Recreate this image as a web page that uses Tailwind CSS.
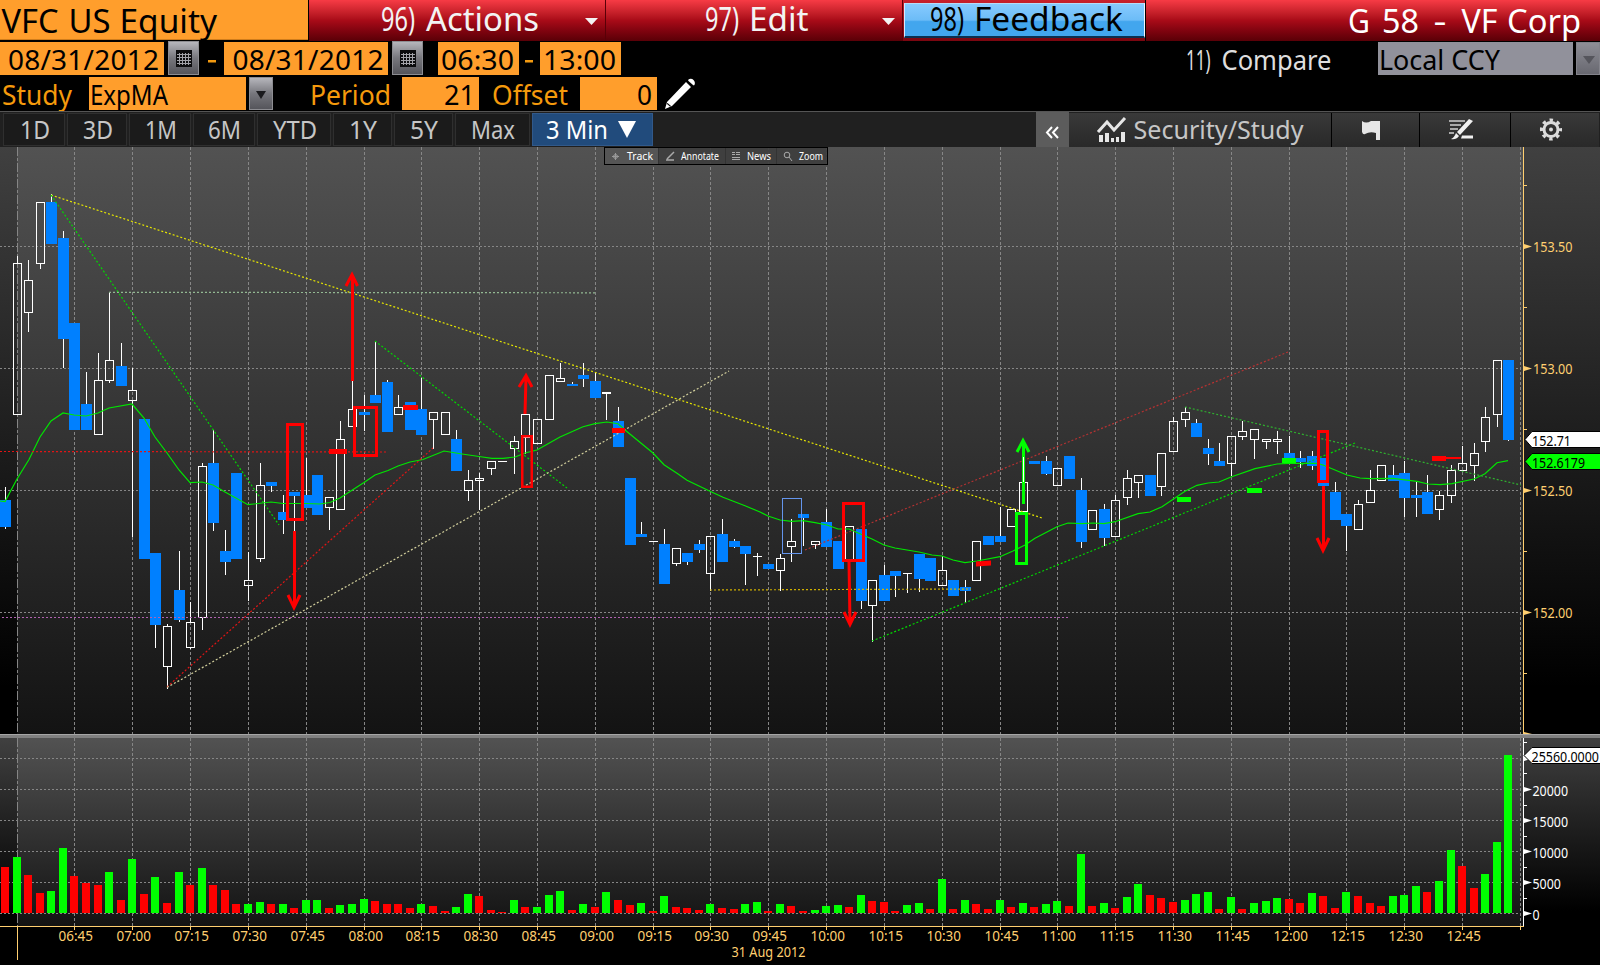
<!DOCTYPE html>
<html lang="en">
<head>
<meta charset="utf-8">
<title>VFC US Equity</title>
<script src="https://cdn.jsdelivr.net/npm/@tailwindcss/browser@4"></script>
</head>
<body class="w-[1600px] h-[965px] overflow-hidden bg-black font-['Noto_Sans',sans-serif] flex flex-col">

<!-- Title bar -->
<header class="flex h-[41px] shrink-0 text-white">
  <div class="w-[308px] h-10 bg-[#ff9e2c] border-b border-[#d07d1c] text-black">
    <svg class="block overflow-visible h-10 w-full" font-size="33"><text x="1.500" y="32.500" textLength="57" lengthAdjust="spacingAndGlyphs">VFC</text><text x="68.500" y="32.500" textLength="42" lengthAdjust="spacingAndGlyphs">US</text><text x="119.500" y="32.500" textLength="97.500" lengthAdjust="spacingAndGlyphs">Equity</text></svg>
  </div>
  <div class="w-[297px] ml-px bg-linear-to-b from-[#f73b45] via-[#a80b18] to-[#5a0007] border-r border-[#5a0007]">
    <svg class="block overflow-visible h-[41px] w-full fill-[#f3f3f3]"><text x="72" y="31" font-size="32" textLength="34" lengthAdjust="spacingAndGlyphs">96)</text><text x="117" y="31" font-size="33" textLength="113" lengthAdjust="spacingAndGlyphs">Actions</text><path d="M276 18h13l-6.500 7z"/></svg>
  </div>
  <div class="w-[297px] bg-linear-to-b from-[#f73b45] via-[#a80b18] to-[#5a0007] border-r border-[#5a0007]">
    <svg class="block overflow-visible h-[41px] w-full fill-[#f3f3f3]"><text x="99" y="31" font-size="32" textLength="34" lengthAdjust="spacingAndGlyphs">97)</text><text x="143" y="31" font-size="33" textLength="59.500" lengthAdjust="spacingAndGlyphs">Edit</text><path d="M276 18h13l-6.500 7z"/></svg>
  </div>
  <div class="w-[243px] bg-linear-to-b from-[#c8202c] to-[#7a0610] pt-[3px] pl-px border-r border-black">
    <div class="h-[35px] w-[241px] border border-t-[#b5dcf8] border-l-[#d5ecff] border-r-[#f0f4ff] border-b-2 border-b-[#0b3050] bg-linear-to-b from-[#86caff] from-0% via-[#6cbcf7] via-50% to-[#42a6ee] to-55%">
      <svg class="block overflow-visible h-8 w-full fill-black"><text x="25" y="27" font-size="32" textLength="34" lengthAdjust="spacingAndGlyphs">98)</text><text x="69" y="27" font-size="33" textLength="149" lengthAdjust="spacingAndGlyphs">Feedback</text></svg>
    </div>
  </div>
  <div class="flex-1 bg-linear-to-b from-[#f73b45] via-[#a80b18] to-[#5a0007]">
    <svg class="block overflow-visible h-[41px] w-full fill-white" font-size="33"><text x="202" y="33" textLength="22" lengthAdjust="spacingAndGlyphs">G</text><text x="236" y="33" textLength="37" lengthAdjust="spacingAndGlyphs">58</text><text x="287.500" y="33" textLength="13" lengthAdjust="spacingAndGlyphs">-</text><text x="315.500" y="33" textLength="36" lengthAdjust="spacingAndGlyphs">VF</text><text x="361" y="33" textLength="74" lengthAdjust="spacingAndGlyphs">Corp</text></svg>
  </div>
</header>

<!-- Date range -->
<section class="flex h-[34px] shrink-0 pt-px">
  <div class="w-[164px] h-[33px] bg-[#ff9e2c]"><svg class="block overflow-visible h-[33px] w-full"><text x="8" y="28" font-size="28" textLength="151">08/31/2012</text></svg></div>
  <div class="ml-1 w-[31px] h-[34px] -mt-px bg-linear-to-b from-[#b6b6bc] via-[#77777d] to-[#55555b] border border-[#8d8d92]">
    <svg class="block w-full h-8" shape-rendering="crispEdges"><path fill="#0c0c0e" d="M7 8h16v17H7z"/><path stroke="#a2a2a8" d="M8 12.500h14M8 15.500h14M8 18.500h14M8 21.500h14M10.500 11v12M13.500 11v12M16.500 11v12M19.500 11v12" /></svg>
  </div>
  <div class="w-[25px]"><svg class="block h-[33px] w-full"><path fill="#f39a10" d="M9 18h8v2.500H9z"/></svg></div>
  <div class="w-[164px] h-[33px] bg-[#ff9e2c]"><svg class="block overflow-visible h-[33px] w-full"><text x="8.500" y="28" font-size="28" textLength="151">08/31/2012</text></svg></div>
  <div class="ml-1 w-[31px] h-[34px] -mt-px bg-linear-to-b from-[#b6b6bc] via-[#77777d] to-[#55555b] border border-[#8d8d92]">
    <svg class="block w-full h-8" shape-rendering="crispEdges"><path fill="#0c0c0e" d="M7 8h16v17H7z"/><path stroke="#a2a2a8" d="M8 12.500h14M8 15.500h14M8 18.500h14M8 21.500h14M10.500 11v12M13.500 11v12M16.500 11v12M19.500 11v12" /></svg>
  </div>
  <div class="ml-[15px] w-[81px] h-[33px] bg-[#ff9e2c]"><svg class="block overflow-visible h-[33px] w-full"><text x="3" y="28" font-size="28" textLength="73" lengthAdjust="spacingAndGlyphs">06:30</text></svg></div>
  <div class="w-[21px]"><svg class="block h-[33px] w-full"><path fill="#f39a10" d="M6 18h8v2.500H6z"/></svg></div>
  <div class="w-[81px] h-[33px] bg-[#ff9e2c]"><svg class="block overflow-visible h-[33px] w-full"><text x="3" y="28" font-size="28" textLength="73" lengthAdjust="spacingAndGlyphs">13:00</text></svg></div>
  <div class="ml-auto w-[150px] mr-[42px]"><svg class="block overflow-visible h-[33px] w-full fill-[#dedede]"><text transform="translate(0 28) scale(.63 1)" font-size="27">11)</text><text x="35.500" y="28" font-size="27" textLength="110" lengthAdjust="spacingAndGlyphs">Compare</text></svg></div>
  <div class="w-[195px] h-[33px] bg-[#91919b]"><svg class="block overflow-visible h-[33px] w-full"><text x="1" y="28" font-size="27" textLength="121" lengthAdjust="spacingAndGlyphs">Local CCY</text></svg></div>
  <div class="ml-[3px] w-[24px] h-[33px] bg-linear-to-b from-[#8e8e96] to-[#686870] border border-[#83838b]"><svg class="block h-full w-full"><path fill="#55555c" d="M6 13h12l-6 8z"/></svg></div>
</section>

<!-- Study parameters -->
<section class="flex h-9 shrink-0 pt-0.5 fill-[#f59a0c]">
  <svg class="block overflow-visible h-[33px] w-[89px]"><text x="2" y="28" font-size="27" textLength="70" lengthAdjust="spacingAndGlyphs">Study</text></svg>
  <div class="w-[157px] h-[33px] bg-[#ff9e2c] fill-black"><svg class="block overflow-visible h-[33px] w-full"><text x="1" y="28" font-size="27" textLength="78" lengthAdjust="spacingAndGlyphs">ExpMA</text></svg></div>
  <div class="ml-[3px] w-6 h-[33px] bg-linear-to-b from-[#b6b6bc] via-[#77777d] to-[#55555b] border border-[#8d8d92] fill-[#1b1b1e]"><svg class="block h-full w-full"><path d="M6 13h10l-5 8z"/></svg></div>
  <svg class="block overflow-visible h-[33px] w-[129px]"><text x="37" y="28" font-size="27" textLength="81" lengthAdjust="spacingAndGlyphs">Period</text></svg>
  <div class="w-[77px] h-[33px] bg-[#ff9e2c] fill-black"><svg class="block overflow-visible h-[33px] w-full"><text x="42" y="28" font-size="27" textLength="31" lengthAdjust="spacingAndGlyphs">21</text></svg></div>
  <svg class="block overflow-visible h-[33px] w-[101px]"><text x="13" y="28" font-size="27" textLength="76" lengthAdjust="spacingAndGlyphs">Offset</text></svg>
  <div class="w-[77px] h-[33px] bg-[#ff9e2c] fill-black"><svg class="block overflow-visible h-[33px] w-full"><text x="57" y="28" font-size="27" textLength="15" lengthAdjust="spacingAndGlyphs">0</text></svg></div>
  <svg class="block h-[33px] w-11 fill-white" viewBox="0 0 44 33"><path d="M8 32l2-7L29 5l5 5-19 19zM31 3c2-2 4-1.500 5.500 0s2 4 .5 5.500l-1-.5-4.500-4z"/><path fill="#000" d="M10.500 26l3.500 3-.8.800-3.500-3z"/></svg>
</section>

<!-- Chart toolbar -->
<nav class="flex h-9 shrink-0 border-t border-[#555] bg-[#202020] pl-[3px] pt-px fill-[#c6c6c6]">
  <div class="w-[62px] mr-0.5 h-[33px] bg-[#1b1b1b] border border-[#2f2f2f]"><svg class="block overflow-visible h-[31px] w-full"><text x="16" y="25" font-size="25" textLength="30" lengthAdjust="spacingAndGlyphs">1D</text></svg></div>
  <div class="w-[60px] mr-0.5 h-[33px] bg-[#1b1b1b] border border-[#2f2f2f]"><svg class="block overflow-visible h-[31px] w-full"><text x="15" y="25" font-size="25" textLength="30" lengthAdjust="spacingAndGlyphs">3D</text></svg></div>
  <div class="w-[62px] mr-0.5 h-[33px] bg-[#1b1b1b] border border-[#2f2f2f]"><svg class="block overflow-visible h-[31px] w-full"><text x="15" y="25" font-size="25" textLength="32" lengthAdjust="spacingAndGlyphs">1M</text></svg></div>
  <div class="w-[62px] mr-0.5 h-[33px] bg-[#1b1b1b] border border-[#2f2f2f]"><svg class="block overflow-visible h-[31px] w-full"><text x="14" y="25" font-size="25" textLength="33" lengthAdjust="spacingAndGlyphs">6M</text></svg></div>
  <div class="w-[74px] mr-0.5 h-[33px] bg-[#1b1b1b] border border-[#2f2f2f]"><svg class="block overflow-visible h-[31px] w-full"><text x="15" y="25" font-size="25" textLength="44" lengthAdjust="spacingAndGlyphs">YTD</text></svg></div>
  <div class="w-[59px] mr-0.5 h-[33px] bg-[#1b1b1b] border border-[#2f2f2f]"><svg class="block overflow-visible h-[31px] w-full"><text x="15" y="25" font-size="25" textLength="28" lengthAdjust="spacingAndGlyphs">1Y</text></svg></div>
  <div class="w-[59px] mr-0.5 h-[33px] bg-[#1b1b1b] border border-[#2f2f2f]"><svg class="block overflow-visible h-[31px] w-full"><text x="15" y="25" font-size="25" textLength="28" lengthAdjust="spacingAndGlyphs">5Y</text></svg></div>
  <div class="w-[75px] mr-0.5 h-[33px] bg-[#1b1b1b] border border-[#2f2f2f]"><svg class="block overflow-visible h-[31px] w-full"><text x="15" y="25" font-size="25" textLength="44" lengthAdjust="spacingAndGlyphs">Max</text></svg></div>
  <div class="w-[121px] h-[33px] bg-[#214b7c] border border-[#31598a] fill-white"><svg class="block overflow-visible h-[31px] w-full"><text x="13" y="25" font-size="25" textLength="62" lengthAdjust="spacingAndGlyphs">3 Min</text><path d="M85 7h18l-9 17z"/></svg></div>
  <div class="ml-auto -mt-px w-[33px] h-[35px] bg-[#5c5c5c]"><svg class="block h-[35px] w-full" fill="none" stroke="#fff" stroke-width="2"><path d="M16 15l-5 5.500 5 5.500M22 15l-5 5.500 5 5.500"/></svg></div>
  <div class="w-[263px] h-[34px] bg-linear-to-b from-[#393939] to-[#292929] border-r border-black">
    <svg class="block overflow-visible h-[34px] w-full"><g fill="none" stroke="#e6e6e6" stroke-width="3"><path d="M29 19l9-10 7 8 11-12"/></g><path fill="#e6e6e6" d="M30 22h4v7h-4zM36 20h4v9h-4zM42 25h3v4h-3zM47 24h3v5h-3zM52 19h4v10h-4z"/><text x="64.500" y="26" font-size="25" textLength="170" lengthAdjust="spacingAndGlyphs">Security/Study</text></svg>
  </div>
  <div class="w-[88px] h-[34px] bg-linear-to-b from-[#393939] to-[#292929] border-r border-black">
    <svg class="block h-[34px] w-full"><path fill="#e6e6e6" d="M30 8q4 3 9 0h9v19h-4v-7q-6-2-11 1-2 1-3-2z"/></svg>
  </div>
  <div class="w-[91px] h-[34px] bg-linear-to-b from-[#393939] to-[#292929] border-r border-black">
    <svg class="block h-[34px] w-full"><path fill="none" stroke="#aaa" stroke-width="2" d="M29 8h16M30 12h11M30 16h8M29 20h5"/><path fill="#f0f0f0" d="M49 6l4 2-13 14-3-3zM36 20l3 3q-3 4-8 3 3-1 5-6zM42 22.500h11v3H41z"/></svg>
  </div>
  <div class="w-[88px] mr-px h-[34px] bg-linear-to-b from-[#393939] to-[#292929]">
    <svg class="block h-[34px] w-full"><g fill="none" stroke="#dcdcdc"><circle cx="40" cy="16.500" r="7" stroke-width="3"/><circle cx="40" cy="16.500" r="9.300" stroke-width="3.500" stroke-dasharray="3.400 3.904" stroke-dashoffset="1.700"/></g><circle cx="40" cy="16.500" r="2" fill="#dcdcdc"/></svg>
  </div>
</nav>

<!-- Chart -->
<main class="relative h-[818px] shrink-0">
  <svg id="chart" class="block w-[1600px] h-[818px]" viewBox="0 147 1600 818">
    <defs>
      <linearGradient id="plot" x1="0" y1="0" x2="0" y2="1"><stop offset="0" stop-color="#525252"/><stop offset="1" stop-color="#131313"/></linearGradient>
      <linearGradient id="side" x1="0" y1="0" x2="0" y2="1"><stop offset="0" stop-color="#404040"/><stop offset=".92" stop-color="#000"/></linearGradient>
    </defs>
    <rect x="0" y="147" width="1600" height="587" fill="url(#side)"/>
    <rect x="17" y="147" width="1506" height="587" fill="url(#plot)"/>
    <rect x="0" y="738" width="1600" height="188" fill="url(#side)"/>
    <rect x="17" y="738" width="1506" height="188" fill="url(#plot)"/>
    <g id="grid" stroke="#868686" shape-rendering="crispEdges"></g>
    <g id="candles" shape-rendering="crispEdges"></g>
    <g id="volume" shape-rendering="crispEdges"></g>
    <polyline id="ema" fill="none" stroke="#00e600" stroke-width="1.200"/>
    <g fill="none" stroke-width="1.200" stroke-dasharray="2 2">
      <path stroke="#e6e600" d="M51 195L1042 518"/>
      <path stroke="#00d800" d="M51 195L279 525M375 341L567 488M872 641L1355 443"/>
      <path stroke="#2fb02f" d="M1185 407L1521 485"/>
      <path stroke="#93b993" d="M109 292.300L595 292.800"/>
      <path stroke="#e01515" d="M0 451.500L386 452M167 687L433 448"/>
      <path stroke="#d2cf9c" d="M167 687.500L729 371"/>
      <path stroke="#d0b000" d="M710 590L971 589"/>
      <path stroke="#b062b0" d="M2 617.500H1068"/>
      <path stroke="#b53232" d="M805 550L1288 352"/>
    </g>
    <rect x="782.500" y="498.500" width="19" height="55" fill="none" stroke="#6495ed"/>
    <g fill="none" stroke="#f00" stroke-width="3">
      <rect x="287.500" y="424.500" width="15" height="95"/>
      <rect x="354.500" y="407.500" width="22" height="48"/>
      <rect x="522.250" y="436.250" width="9.500" height="50.500" stroke-width="2.500"/>
      <rect x="843.500" y="503.500" width="20" height="57"/>
      <rect x="1318.500" y="431.500" width="9" height="50"/>
      <path d="M352.500 381V276M346 286L352 274.500L357.500 286"/>
      <path d="M294.500 531V606M288 595L294 607.500L300 595"/>
      <path d="M525 414L526 377M519 387L526 375.500L532 387"/>
      <path d="M849 562L850 623M844 612L850 624.500L856 612"/>
      <path d="M1323.500 486V549M1317 538L1323 550.500L1329 538"/>
      <path stroke-width="2" d="M1445 458H1461"/>
    </g>
    <g fill="#f00"><path d="M329 449h18v5h-18zM403 405h15v5h-15zM612 428h13v5h-13zM976 561.500l15-1v5l-15 1zM1432 456h14v5h-14z"/></g>
    <g fill="none" stroke="#0f0" stroke-width="3"><rect x="1016.500" y="513.500" width="10" height="50"/><path d="M1023.500 504V442M1017 452L1023 440.500L1029 452"/></g>
    <path stroke="#fff" d="M1023.500 457V482"/>
    <path fill="#0f0" d="M1177 497h14v5h-14zM1247 488h15v5h-15zM1282 458h14v5h-14z"/>
    <path fill="#a6a6a6" d="M0 734h1600v1H0z"/><path fill="#808080" d="M0 735h1600v3H0z"/>
    <g id="axes" font-size="14"></g>
    <g stroke="#000">
      <path fill="#fff" d="M1525 439.500L1532 431.500H1602V447.500H1532Z"/>
      <path fill="#0f0" d="M1525 461.500L1532 453.500H1602V469.500H1532Z"/>
      <path fill="#fff" d="M1524 755.500L1532 747.500H1602V763.500H1532Z"/>
    </g>
    <g font-size="14">
      <text x="1532" y="446" textLength="39" lengthAdjust="spacingAndGlyphs">152.71</text>
      <text x="1532" y="468" textLength="53" lengthAdjust="spacingAndGlyphs">152.6179</text>
      <text x="1531.500" y="762" textLength="67.500" lengthAdjust="spacingAndGlyphs">25560.0000</text>
    </g>
  </svg>

  <div class="absolute left-[604px] top-0 flex h-[18px] w-[224px] border border-black bg-[#3d3d3d]/90">
    <div class="w-[53px] bg-[#555]"><svg class="block h-4 w-full fill-white"><g fill="none" stroke="#999"><circle cx="10.500" cy="8.500" r="2"/><path d="M10.500 5v7M7 8.500h7"/></g><text x="22" y="12" font-size="10" textLength="26" lengthAdjust="spacingAndGlyphs">Track</text></svg></div>
    <div class="w-[67px] border-l border-[#333]"><svg class="block h-4 w-full fill-white"><path fill="none" stroke="#aaa" stroke-width="1.500" d="M8 11l7-7M7 12h8"/><text x="22" y="12" font-size="10" textLength="38" lengthAdjust="spacingAndGlyphs">Annotate</text></svg></div>
    <div class="w-[51px] border-l border-[#333]"><svg class="block h-4 w-full fill-white"><path stroke="#aaa" d="M6 4.500h3M6 6.500h3M10 4.500h4M10 6.500h4M6 9.500h8M6 11.500h8"/><text x="21" y="12" font-size="10" textLength="24" lengthAdjust="spacingAndGlyphs">News</text></svg></div>
    <div class="flex-1 border-l border-[#333]"><svg class="block h-4 w-full fill-white"><path fill="none" stroke="#aaa" d="M12 9l3 4"/><circle cx="10" cy="7" r="2.800" fill="none" stroke="#aaa"/><text x="22" y="12" font-size="10" textLength="24" lengthAdjust="spacingAndGlyphs">Zoom</text></svg></div>
  </div>
</main>

<script>
const NS = 'http://www.w3.org/2000/svg';
const add = (id, tag, attrs, text) => {
  const el = document.createElementNS(NS, tag);
  for (const k in attrs) el.setAttribute(k, attrs[k]);
  if (text) el.textContent = text;
  document.getElementById(id).appendChild(el);
};
// Centre column of the n-th three-minute interval after 06:30
const cx = n => Math.floor(17.17 + 11.5635 * n);

// kind high open/close-top open/close-bottom low, starting one interval before 06:30
const candles = `b 487 500 527 529|w 256 263 415 415|w 260 280 313 332|w 202 202 264 269|b 194 202 244 244|b 231 238 339 368|b 323 323 430 430|b 372 404 430 430|w 353 380 435 435|w 292 360 381 383|b 343 366 386 386|w 368 390 401 537|b 419 419 559 559|b 553 553 625 648|w 624 626 667 689|b 551 590 620 622|w 602 622 648 649|w 463 466 618 630|b 430 463 523 531|b 530 551 562 575|b 473 473 559 559|w 552 580 586 601|w 463 485 559 562|b 482 482 486 492|b 495 512 520 534|b 492 492 496 531|b 458 495 508 508|b 475 475 515 515|w 497 497 508 530|w 421 439 510 510|w 380 409 427 427|b 395 412 415 431|b 341 395 403 403|b 380 382 432 432|w 395 407 415 415|b 402 402 430 430|b 378 409 435 435|w 412 412 420 449|w 412 412 435 435|b 430 439 471 471|w 470 480 491 501|w 473 478 481 510|w 461 461 469 475|w 461 461 462 462|w 436 441 449 474|w 414 414 438 454|w 419 419 444 444|w 375 375 420 420|w 363 378 382 382|b 382 384 386 386|b 363 375 379 387|b 373 381 398 398|w 392 392 394 420|b 407 421 447 447|b 478 478 545 545|b 522 534 537 537|w 541 541 542 542|b 529 544 584 584|w 548 548 564 566|b 553 553 562 565|b 540 544 550 553|w 536 536 574 591|b 519 534 562 562|b 539 541 547 548|b 546 546 554 585|w 553 556 557 576|b 564 564 569 569|w 554 558 571 591|w 519 541 547 562|b 514 514 518 546|w 541 541 545 549|b 509 522 547 547|b 541 541 569 569|w 526 526 560 560|b 529 529 601 609|w 580 580 606 642|b 565 575 601 601|b 571 571 576 597|w 573 573 574 593|b 554 554 579 592|b 558 558 581 581|w 556 570 586 586|b 580 580 596 596|b 580 587 591 603|w 541 541 581 581|b 536 536 545 545|b 507 536 542 542|w 509 509 527 527|w 457 482 512 512|b 461 461 464 464|b 456 461 474 475|w 468 468 486 486|b 456 456 479 479|b 478 490 542 548|w 510 510 530 530|b 504 509 538 546|w 495 500 537 537|w 470 478 498 505|w 475 475 483 498|b 475 475 496 496|w 453 453 487 496|w 417 421 452 452|w 407 412 420 427|b 419 423 437 437|b 439 448 454 465|b 443 461 466 466|w 436 436 464 476|w 421 431 437 440|w 429 429 440 459|w 439 439 442 449|w 431 439 442 454|b 436 453 459 459|b 451 458 462 468|b 451 456 466 470|b 458 458 486 486|b 482 492 520 520|b 514 514 526 551|w 500 504 530 530|w 470 490 503 503|w 465 465 481 481|b 465 475 481 481|b 461 473 498 517|b 482 495 498 517|b 475 492 514 514|w 491 495 510 520|w 465 470 496 503|w 446 463 471 471|w 443 453 466 481|w 407 417 442 452|w 360 360 415 427|b 360 360 440 441`;

// direction and top edge of each volume bar
const volume = `r867 g857 r875 r893 g891 g848 r876 r883 r885 g872 r900 g859 r894 g877 r903 g872 r885 g868 r885 r890 r904 g904 g902 r904 g904 r908 g900 g900 r908 g905 g904 g899 r901 r904 r904 r908 g904 r906 r911 g907 g894 r896 r910 r912 g900 r907 g907 g895 g891 r910 g904 r907 g892 r900 r905 g903 r911 g896 r907 r908 r910 g904 r908 r909 g904 g902 r911 g904 r906 r911 g910 g906 g905 r907 g895 r901 r902 r911 g905 g903 r909 g879 r909 g900 r904 r909 g900 r907 g903 r907 g904 g901 r906 g854 r906 g903 r908 g897 g884 r895 r898 r902 g900 g894 g892 r909 g897 r909 g903 g901 g898 r899 r903 g893 r896 r908 g892 r896 r903 r906 g896 g895 g886 r892 g881 g850 r866 r888 g874 g842 g755`;

// Grid
for (let n = 0; n <= 130; n += 5) {
  const x = cx(n) + .5, dash = n ? '3 2' : '9 2 3 2';
  add('grid', 'path', { d: `M${x} 147V734M${x} 738V926`, 'stroke-dasharray': dash });
}
for (const y of [246, 368, 490, 612, 758, 789, 820, 851, 882, 913])
  add('grid', 'path', { d: `M0 ${y + .5}H1520`, 'stroke-dasharray': '2 2' });

candles.split('|').forEach((row, k) => {
  const [kind, ...v] = row.split(' ');
  const [hi, top, bot, lo] = v.map(Number), x = cx(k - 1);
  if (kind === 'b') {
    add('candles', 'rect', { x, y: hi, width: 1, height: lo - hi, fill: '#fff' });
    add('candles', 'rect', { x: x - 5, y: top, width: 11, height: bot - top, fill: '#0080ff' });
  } else {
    if (top > hi) add('candles', 'rect', { x, y: hi, width: 1, height: top - hi, fill: '#fff' });
    if (lo > bot) add('candles', 'rect', { x, y: bot, width: 1, height: lo - bot, fill: '#fff' });
    if (bot - top < 3) add('candles', 'rect', { x: x - 4, y: top, width: 9, height: bot - top, fill: '#fff' });
    else add('candles', 'rect', { x: x - 3.5, y: top + .5, width: 8, height: bot - top - 1, fill: 'none', stroke: '#fff' });
  }
});

volume.split(' ').forEach((v, k) => {
  const y = +v.slice(1);
  add('volume', 'rect', { x: cx(k - 1) - 4, y, width: 8, height: 913 - y, fill: v[0] === 'g' ? '#0f0' : '#f00' });
});

document.getElementById('ema').setAttribute('points', '0,501 5,501.5 17,479 29,459.5 40,437 51,421 63,413 74,415 86,416 98,413 109,408 132,404 144,418 155,437 167,453 179,470 190,482.7 202,482 213,485 225,492 248,504.7 271,502 283,503.5 306,503.5 320,504 330,502.5 340,498 364,482.5 375,475 388,470.5 398,466 410,462 423,459.5 444,451 462,454 479,456.5 492,458.3 503,458.3 515,457 526,452.7 537,450 560,437 583,426.7 595,423.7 607,422 618,423.7 625,430 653,453 664,464.7 677,473.3 687,480.3 710,491.3 723,497.3 745,505.7 760,512 768,516 780,520 792,521.3 803,520.7 815,522.7 827,525 838,529 849,529 872,539 884,545 895,548 919,552 932,555 942,556 953,560 965,562.7 977,561 1000,556.7 1013,551 1025,545 1035,538.3 1057,526.7 1068,523 1082,523.7 1093,523 1104,523.7 1115,521.7 1138,513.7 1150,512 1162,506.7 1185,491.3 1197,485.3 1208,483 1219,482 1231,477 1255,468.7 1277,464 1289,463.3 1317,463.3 1323,465 1347,475 1360,478 1370,478.7 1393,478.3 1417,481.3 1428,484 1440,484.7 1452,483.7 1474,479 1485,473.7 1497,462.7 1508,460.7');

// Axes
const gold = '#ffcf70', white = '#fff', squeeze = 'spacingAndGlyphs';
add('axes', 'path', { d: 'M1523 147h1v587h-1zM0 926h1524v1H0zM17 926h1v34h-1z', fill: gold });
add('axes', 'path', { d: 'M1523 738h1v188h-1z', fill: white });
for (const y of [185, 307, 429, 551, 673]) add('axes', 'rect', { x: 1524, y, width: 3, height: 1, fill: gold });
[['153.50', 246], ['153.00', 368], ['152.50', 490], ['152.00', 612]].forEach(([t, y]) => {
  add('axes', 'path', { d: `M1524 ${y - 2}L1532 ${y + .5}L1524 ${y + 3}z`, fill: gold });
  add('axes', 'text', { x: 1533, y: y + 6, textLength: 39.5, lengthAdjust: squeeze, fill: gold }, t);
});
add('axes', 'path', { d: 'M1524 732L1532 734H1524z', fill: gold });
for (const y of [742, 773, 805, 836, 867, 898]) add('axes', 'rect', { x: 1524, y, width: 3, height: 1, fill: white });
[['', 758], ['20000', 789], ['15000', 820], ['10000', 851], ['5000', 882], ['0', 913]].forEach(([t, y]) => {
  add('axes', 'path', { d: `M1524 ${y - 2}L1532 ${y + .5}L1524 ${y + 3}z`, fill: white });
  if (t) add('axes', 'text', { x: 1532.5, y: y + 7, textLength: 7.1 * t.length, lengthAdjust: squeeze, fill: white }, t);
});
for (let n = 5; n <= 130; n += 5) {
  const x = cx(n), m = 390 + n * 3;
  add('axes', 'rect', { x, y: 926, width: 1, height: 4, fill: gold });
  if (n === 130) break;
  const label = String(Math.floor(m / 60)).padStart(2, '0') + ':' + String(m % 60).padStart(2, '0');
  add('axes', 'text', { x: x - 15.5, y: 941, textLength: 34.5, lengthAdjust: squeeze, fill: gold }, label);
}
add('axes', 'text', { x: 731.5, y: 957, textLength: 74, lengthAdjust: squeeze, fill: gold }, '31 Aug 2012');
</script>
</body>
</html>
